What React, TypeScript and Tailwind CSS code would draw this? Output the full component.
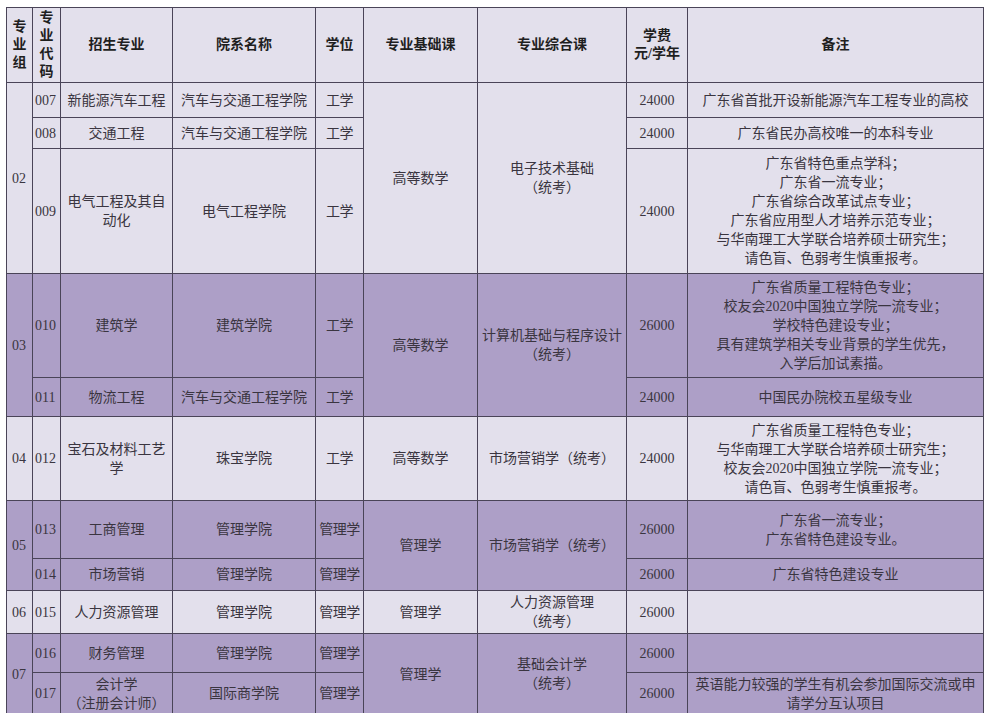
import React from "react";

const L = "bg-[#e3e0ec]";
const P = "bg-[#ad9fc7]";
const td = "border border-[#4a4458] text-center align-middle p-0 px-[3px] text-[14px] leading-[19px] text-[#3a3540]";
const th = "border border-[#4a4458] text-center align-middle p-0 text-[14px] leading-[18px] font-bold text-[#1f1f1f]";
const grp = "border border-[#4a4458] text-left align-middle p-0 pl-[5px] text-[14px] text-[#3a3540]";
const code = "border border-[#4a4458] text-left align-middle p-0 pl-[2px] text-[14px] text-[#3a3540]";
const deg = "border border-[#4a4458] text-center align-middle p-0 text-[14px] leading-[19px] text-[#3a3540] whitespace-nowrap tracking-[-0.5px]";

function Lines({ items }: { items: string[] }) {
  return (
    <>
      {items.map((t, i) => (
        <div key={i}>{t}</div>
      ))}
    </>
  );
}

export default function App() {
  return (
    <div
      className="w-[987px] h-[713px] overflow-hidden bg-white pt-[7px] pl-[6px]"
      style={{ fontFamily: '"Liberation Serif", "Noto Sans CJK SC", serif' }}
    >
      <table className="border-collapse table-fixed w-[977px]">
        <colgroup>
          <col className="w-[26px]" />
          <col className="w-[28px]" />
          <col className="w-[112px]" />
          <col className="w-[143px]" />
          <col className="w-[48px]" />
          <col className="w-[114px]" />
          <col className="w-[149px]" />
          <col className="w-[61px]" />
          <col className="w-[296px]" />
        </colgroup>
        <tbody>
          <tr className={`h-[75px] ${L}`}>
            <th className={`${th} leading-[18px]`}>
              <Lines items={["专", "业", "组"]} />
            </th>
            <th className={`${th} leading-[16px]`}>
              <Lines items={["专", "业", "代", "码"]} />
            </th>
            <th className={th}>招生专业</th>
            <th className={th}>院系名称</th>
            <th className={th}>学位</th>
            <th className={th}>专业基础课</th>
            <th className={th}>专业综合课</th>
            <th className={th}>
              <Lines items={["学费", "元/学年"]} />
            </th>
            <th className={th}>备注</th>
          </tr>

          {/* group 02 */}
          <tr className={`h-[35px] ${L}`}>
            <td rowSpan={3} className={grp}>02</td>
            <td className={code}>007</td>
            <td className={td}>新能源汽车工程</td>
            <td className={td}>汽车与交通工程学院</td>
            <td className={deg}>工学</td>
            <td rowSpan={3} className={td}>高等数学</td>
            <td rowSpan={3} className={td}>
              <Lines items={["电子技术基础", "（统考）"]} />
            </td>
            <td className={td}>24000</td>
            <td className={td}>广东省首批开设新能源汽车工程专业的高校</td>
          </tr>
          <tr className={`h-[31px] ${L}`}>
            <td className={code}>008</td>
            <td className={td}>交通工程</td>
            <td className={td}>汽车与交通工程学院</td>
            <td className={deg}>工学</td>
            <td className={td}>24000</td>
            <td className={td}>广东省民办高校唯一的本科专业</td>
          </tr>
          <tr className={`h-[125px] ${L}`}>
            <td className={code}>009</td>
            <td className={td}>
              <Lines items={["电气工程及其自", "动化"]} />
            </td>
            <td className={td}>电气工程学院</td>
            <td className={deg}>工学</td>
            <td className={td}>24000</td>
            <td className={td}>
              <Lines
                items={[
                  "广东省特色重点学科；",
                  "广东省一流专业；",
                  "广东省综合改革试点专业；",
                  "广东省应用型人才培养示范专业；",
                  "与华南理工大学联合培养硕士研究生；",
                  "请色盲、色弱考生慎重报考。",
                ]}
              />
            </td>
          </tr>

          {/* group 03 */}
          <tr className={`h-[104px] ${P}`}>
            <td rowSpan={2} className={grp}>03</td>
            <td className={code}>010</td>
            <td className={td}>建筑学</td>
            <td className={td}>建筑学院</td>
            <td className={deg}>工学</td>
            <td rowSpan={2} className={td}>高等数学</td>
            <td rowSpan={2} className={td}>
              <Lines items={["计算机基础与程序设计", "（统考）"]} />
            </td>
            <td className={td}>26000</td>
            <td className={td}>
              <Lines
                items={[
                  "广东省质量工程特色专业；",
                  "校友会2020中国独立学院一流专业；",
                  "学校特色建设专业；",
                  "具有建筑学相关专业背景的学生优先，",
                  "入学后加试素描。",
                ]}
              />
            </td>
          </tr>
          <tr className={`h-[39px] ${P}`}>
            <td className={code}>011</td>
            <td className={td}>物流工程</td>
            <td className={td}>汽车与交通工程学院</td>
            <td className={deg}>工学</td>
            <td className={td}>24000</td>
            <td className={td}>中国民办院校五星级专业</td>
          </tr>

          {/* group 04 */}
          <tr className={`h-[84px] ${L}`}>
            <td className={grp}>04</td>
            <td className={code}>012</td>
            <td className={td}>
              <Lines items={["宝石及材料工艺", "学"]} />
            </td>
            <td className={td}>珠宝学院</td>
            <td className={deg}>工学</td>
            <td className={td}>高等数学</td>
            <td className={td}>市场营销学（统考）</td>
            <td className={td}>24000</td>
            <td className={td}>
              <Lines
                items={[
                  "广东省质量工程特色专业；",
                  "与华南理工大学联合培养硕士研究生；",
                  "校友会2020中国独立学院一流专业；",
                  "请色盲、色弱考生慎重报考。",
                ]}
              />
            </td>
          </tr>

          {/* group 05 */}
          <tr className={`h-[58px] ${P}`}>
            <td rowSpan={2} className={grp}>05</td>
            <td className={code}>013</td>
            <td className={td}>工商管理</td>
            <td className={td}>管理学院</td>
            <td className={deg}>管理学</td>
            <td rowSpan={2} className={td}>管理学</td>
            <td rowSpan={2} className={td}>市场营销学（统考）</td>
            <td className={td}>26000</td>
            <td className={td}>
              <Lines items={["广东省一流专业；", "广东省特色建设专业。"]} />
            </td>
          </tr>
          <tr className={`h-[32px] ${P}`}>
            <td className={code}>014</td>
            <td className={td}>市场营销</td>
            <td className={td}>管理学院</td>
            <td className={deg}>管理学</td>
            <td className={td}>26000</td>
            <td className={td}>广东省特色建设专业</td>
          </tr>

          {/* group 06 */}
          <tr className={`h-[43px] ${L}`}>
            <td className={grp}>06</td>
            <td className={code}>015</td>
            <td className={td}>人力资源管理</td>
            <td className={td}>管理学院</td>
            <td className={deg}>管理学</td>
            <td className={td}>管理学</td>
            <td className={td}>
              <Lines items={["人力资源管理", "（统考）"]} />
            </td>
            <td className={td}>26000</td>
            <td className={td}></td>
          </tr>

          {/* group 07 */}
          <tr className={`h-[39px] ${P}`}>
            <td rowSpan={2} className={grp}>07</td>
            <td className={code}>016</td>
            <td className={td}>财务管理</td>
            <td className={td}>管理学院</td>
            <td className={deg}>管理学</td>
            <td rowSpan={2} className={td}>管理学</td>
            <td rowSpan={2} className={td}>
              <Lines items={["基础会计学", "（统考）"]} />
            </td>
            <td className={td}>26000</td>
            <td className={td}></td>
          </tr>
          <tr className={`h-[42px] ${P}`}>
            <td className={code}>017</td>
            <td className={td}>
              <Lines items={["会计学", "（注册会计师）"]} />
            </td>
            <td className={td}>国际商学院</td>
            <td className={deg}>管理学</td>
            <td className={td}>26000</td>
            <td className={td}>
              <Lines items={["英语能力较强的学生有机会参加国际交流或申", "请学分互认项目"]} />
            </td>
          </tr>
        </tbody>
      </table>
    </div>
  );
}
